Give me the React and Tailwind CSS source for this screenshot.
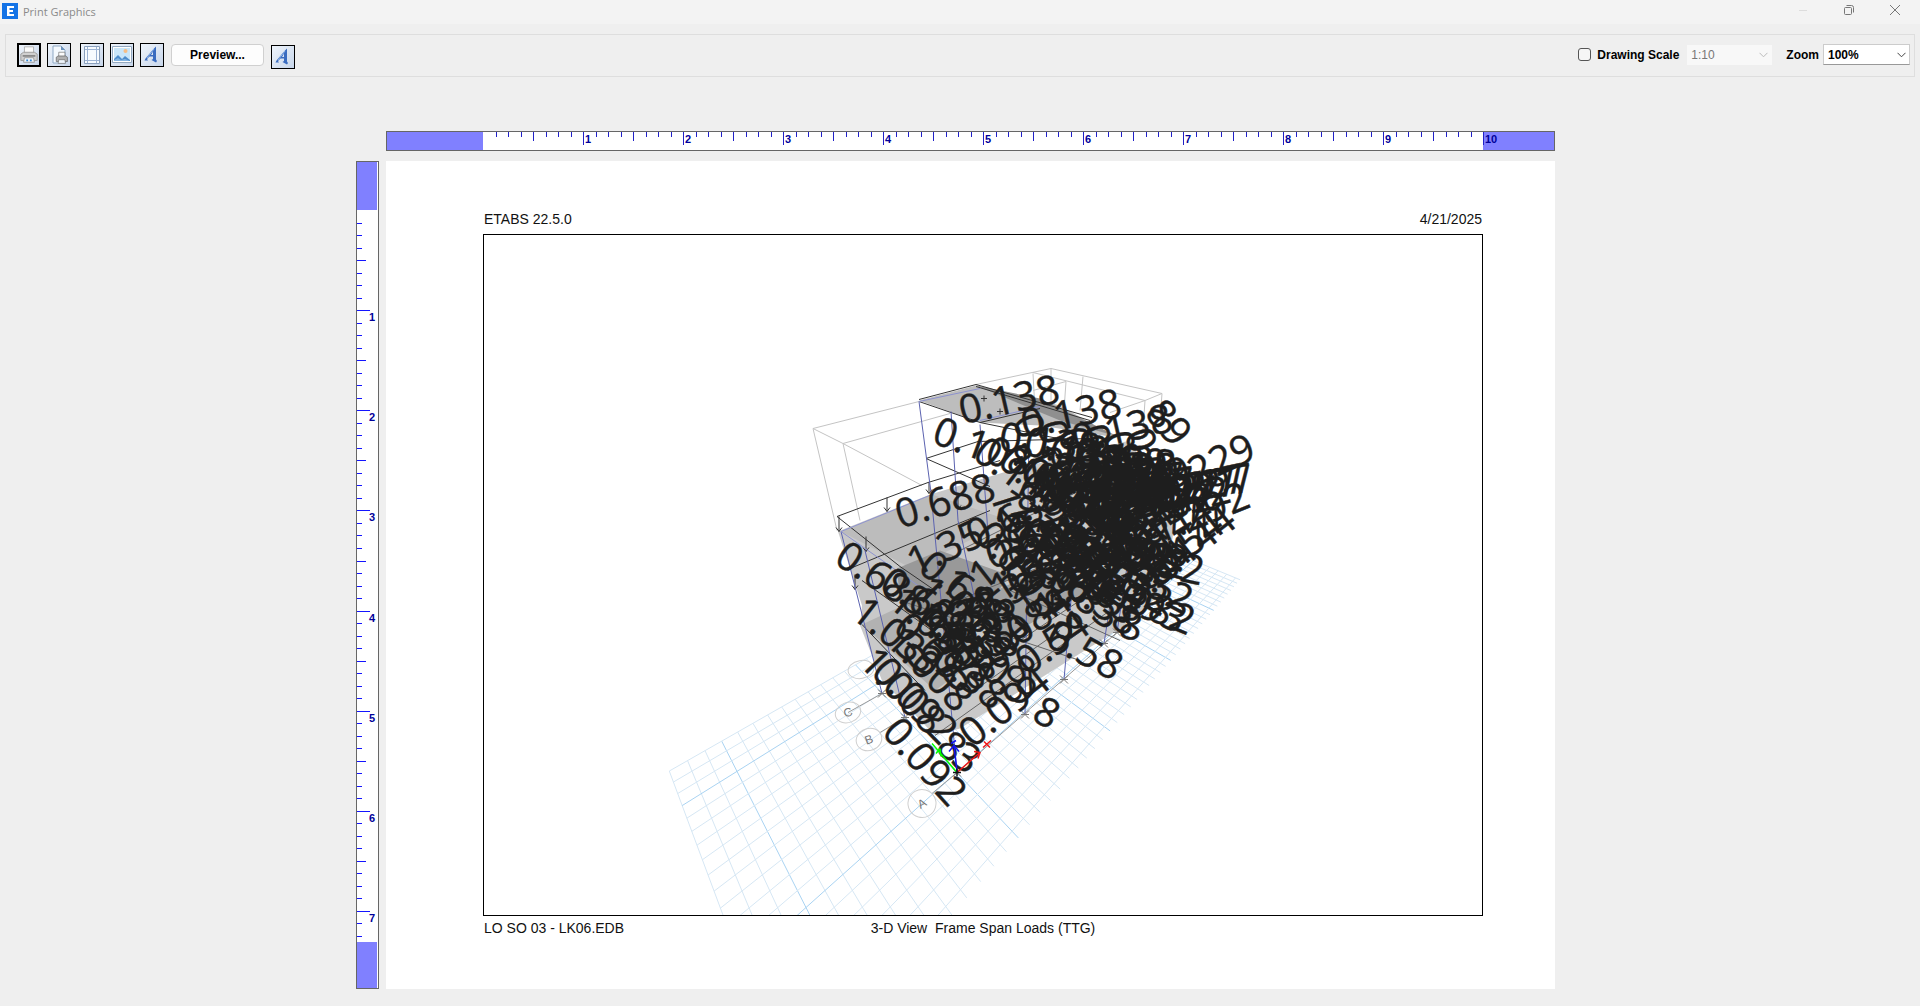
import React from "react";

const INCH_TICKS = ["h-[13px]", "h-[5px]", "h-[5px]", "h-[5px]", "h-[9px]", "h-[5px]", "h-[5px]", "h-[5px]"];
const SIDE_TICKS = ["w-[13px]", "w-[5px]", "w-[5px]", "w-[5px]", "w-[9px]", "w-[5px]", "w-[5px]", "w-[5px]"];

/* ---------- toolbar icons ---------- */

const PrinterShape = () => (
  <>
    <path d="M6 2h10v8H6z" fill="#fbfbfb" stroke="#b0b0b0" />
    <path d="M2 10l3-2h12l3 2v7H2z" fill="#d0d0d0" stroke="#999" />
    <path d="M4 11h14v2H4z" fill="#8a8a8a" />
    <path d="M6 14h10l1 5H5z" fill="#eef4fa" stroke="#9a9a9a" />
    <path d="M8 16h2v2H8zM12 16h2v2h-2z" fill="#2f86d6" />
  </>
);

const PrintIcon = () => (
  <svg viewBox="0 0 22 22" className="h-full w-full">
    <PrinterShape />
  </svg>
);

const PageSetupIcon = () => (
  <svg viewBox="0 0 22 22" className="h-full w-full">
    <path d="M5 2h8l4 4v13H5z" fill="#f4f9fe" stroke="#8fa9c4" />
    <path d="M13 2v4h4z" fill="#6b93bd" />
    <g transform="translate(7 7) scale(.62)">
      <path d="M6 2h10v8H6z" fill="#fbfbfb" stroke="#666" />
      <path d="M2 10l3-2h12l3 2v7H2z" fill="#b0b0b0" stroke="#555" />
      <path d="M6 14h10l1 6H5z" fill="#eef4fa" stroke="#666" />
    </g>
  </svg>
);

const MarginsIcon = () => (
  <svg viewBox="0 0 22 22" className="h-full w-full">
    <path d="M3.500 2.500h15v17h-15z" fill="#f7fbff" stroke="#8aa0bd" />
    <path d="M6.500 3v16M15.500 3v16M4 5.500h14M4 16.500h14" stroke="#9db4d4" />
  </svg>
);

const PictureIcon = () => (
  <svg viewBox="0 0 22 22" className="h-full w-full">
    <path d="M1.500 2.500h19v16h-19z" fill="#fff" stroke="#93a9c0" />
    <path d="M3 4h16v13H3z" fill="#c9e6f9" />
    <circle cx="14.500" cy="7" r="2" fill="#f6bd84" />
    <path d="M3 17v-2l4-4 4 4 3-3 5 4v1z" fill="#4d8ccb" />
    <path d="M3 17v-1l4-2 3 2 4-1 5 2z" fill="#86b5e0" />
  </svg>
);

const FontIcon = () => (
  <svg viewBox="0 0 22 22" className="h-full w-full">
    <path d="M15 2.500v13l1 1.500-1 1.500-4.500-2.500 1.500-1V12.500H8.500l-2.500 2.500 1 1.500H3.500l1-2 8-9.500zM10 11h2V7.500z" fill="#3a6cc0" />
    <path d="M13 5l-7 9" stroke="#8fb6ea" />
  </svg>
);

const ToolButton = ({ label, children, active, className = "" }) => (
  <button
    type="button"
    aria-label={label}
    className={`h-6 w-6 border-black bg-linear-to-br from-[#eef4fb] to-[#c8d6ea] ${active ? "border-2" : "border"} ${className}`}
  >
    {children}
  </button>
);

const Chevron = ({ className }) => (
  <svg viewBox="0 0 9 6" className={`pointer-events-none absolute right-1 top-1/2 h-[6px] w-[9px] -translate-y-1/2 ${className}`}>
    <path d="M.5 .8l4 4 4-4" fill="none" stroke="currentColor" />
  </svg>
);

/* ---------- rulers ---------- */

const TopRuler = () => (
  <div className="flex h-5 border border-[#666] bg-white text-[11px] font-bold leading-none text-[#00009a]">
    <div className="flex-[96] bg-[#8080ff]" />
    <div className="flex flex-[1000]">
      {Array.from({ length: 10 }, (_, inch) => (
        <div key={inch} className="relative grid flex-1 grid-cols-8">
          {INCH_TICKS.map((size, i) => (
            <span key={i} className={inch + i > 0 ? `border-l border-[#2020c8] ${size}` : size} />
          ))}
          {inch > 0 && <span className="absolute left-0.5 top-0.5">{inch}</span>}
        </div>
      ))}
    </div>
    <div className="relative flex-[71] bg-[#8080ff]">
      <span className="block h-[13px] border-l border-[#2020c8] pl-px pt-0.5">10</span>
    </div>
  </div>
);

const SideRuler = () => (
  <div className="flex flex-col border border-[#666] bg-white text-[11px] font-bold leading-none text-[#00009a]">
    <div className="mr-px flex-[48] bg-[#8080ff]" />
    <div className="flex flex-[731] flex-col">
      {Array.from({ length: 7 }, (_, inch) => (
        <div key={inch} className="relative grid flex-[100] grid-rows-8">
          {SIDE_TICKS.map((size, i) => (
            <span key={i} className={inch + i > 0 ? `border-t border-[#1414ff] ${size}` : size} />
          ))}
          {inch > 0 && <span className="absolute right-[3px] top-0.5">{inch}</span>}
        </div>
      ))}
      <div className="relative flex flex-[31] flex-col">
        <span className="w-[13px] flex-[12] border-t border-[#1414ff]" />
        <span className="w-[5px] flex-[13] border-t border-[#1414ff]" />
        <span className="w-[5px] flex-[6] border-t border-[#1414ff]" />
        <span className="absolute right-[3px] top-0.5">7</span>
      </div>
    </div>
    <div className="mr-px flex-[46] bg-[#8080ff]" />
  </div>
);

/* ---------- 3-D view ---------- */

// ground plane -> view coordinates
const project = (u, v) => {
  const w = 1 + 0.296 * u + 0.27 * v;
  return [(806 + 434 * u + 130 * v) / w, (907 + 93.5 * u + 72 * v) / w];
};

const U_MIN = -0.3;
const U_MAX = 4.8;
const V_MIN = -0.55;
const V_MAX = 1.3;

const gridLines = [];
for (let i = -3; i <= 48; i++) {
  gridLines.push({ major: i % 10 === 0, from: project(i / 10, V_MIN), to: project(i / 10, V_MAX) });
}
for (let j = -5; j <= 13; j++) {
  gridLines.push({ major: j % 10 === 0, from: project(U_MIN, j / 10), to: project(U_MAX, j / 10) });
}

// x, y of the label's centre, angle, value
const labels = [
  [1009, 399, -13, "0.138"],
  [1071, 413, -13, "0.138"],
  [1122, 428, -13, "0.138"],
  [1169, 422, 50, "89"],
  [983, 446, 20, "0.108"],
  [945, 500, -17, "0.688"],
  [883, 578, 33, "0.688"],
  [945, 547, -25, "1.35"],
  [898, 636, 38, "1.033"],
  [903, 690, 46, "1.008"],
  [915, 700, 46, "0.092"],
  [925, 761, 48, "0.092"],
  [1004, 706, -38, "0.094"],
  [1010, 680, 38, "0.9"],
  [1085, 650, 28, "0.58"],
  [1052, 642, -35, "0.54"],
  [1103, 603, 35, "0.58"],
  [1206, 466, -25, "1.229"],
  [1203, 485, -10, "1.297"],
  [1195, 487, -12, "1.227"],
  [1187, 490, -12, "1.297"],
  [1200, 512, -22, "1.292"],
  [1190, 545, -38, "0.144"],
  [1178, 550, -38, "0.154"],
  [1165, 563, 12, "0.52"],
  [1146, 603, 22, "0.082"],
  [1138, 600, 24, "0.093"],
];

// label rows along the beams: start, end, count, angle, value
const runs = [
  [1050, 446, 1125, 460, 4, 10, "0.138"],
  [1062, 464, 1140, 478, 8, -12, "1.229"],
  [1040, 455, 1150, 470, 6, 70, "0.18"],
  [1085, 474, 1165, 492, 9, -8, "1.297"],
  [1020, 480, 1090, 500, 4, 40, "0.109"],
  [1100, 500, 1180, 505, 6, -16, "1.292"],
  [1080, 500, 1140, 540, 6, 32, "0.458"],
  [1030, 505, 1150, 525, 7, -38, "1.35"],
  [1090, 520, 1165, 530, 5, -35, "0.144"],
  [1045, 540, 1150, 555, 7, 18, "0.82"],
  [1015, 530, 1095, 570, 6, 75, "1.08"],
  [1015, 520, 1055, 560, 3, -20, "0.688"],
  [1085, 565, 1145, 580, 4, 30, "0.052"],
  [1100, 560, 1155, 575, 4, -40, "0.54"],
  [1005, 560, 1070, 590, 4, -35, "1.35"],
  [1010, 560, 1050, 600, 3, 50, "0.18"],
  [1085, 600, 1105, 590, 2, 40, "0.83"],
  [928, 608, 965, 590, 2, 36, "0.688"],
  [935, 630, 985, 605, 3, 42, "1.033"],
  [930, 650, 980, 620, 3, 46, "0.69"],
  [930, 672, 955, 645, 2, 48, "1.008"],
  [940, 645, 965, 615, 2, -32, "0.38"],
  [980, 625, 1010, 590, 2, -36, "1.35"],
  [985, 655, 1025, 625, 2, -38, "0.084"],
  [970, 680, 1000, 650, 2, 40, "0.38"],
];

const runLabels = runs.flatMap(([x1, y1, x2, y2, count, angle, value]) =>
  Array.from({ length: count }, (_, i) => {
    const t = count > 1 ? i / (count - 1) : 0;
    return [x1 + (x2 - x1) * t, y1 + (y2 - y1) * t + ((i * 7) % 5) * 2 - 4, angle + ((i * 5) % 7) - 3, value];
  })
);

const columns = [
  "M841 531L882 693",
  "M865 550L905 717",
  "M919 401L931 492L957 772",
  "M951 411L958 520L975 600",
  "M980 424L990 560",
  "M1029 430L1025 714",
  "M1078 520L1064 679",
  "M1120 540L1104 643",
  "M1128 560L1117 632",
];

const supports = [
  [882, 693],
  [905, 717],
  [957, 772],
  [1025, 714],
  [1064, 679],
  [1104, 643],
  [1117, 632],
];

const bubbles = [
  [861, 669, 13, 9, -10, ""],
  [848, 712, 13, 10, -20, "C"],
  [869, 739, 13, 11, -20, "B"],
  [922, 803, 14, 14, -30, "A"],
];

const ModelView = () => (
  <svg viewBox="484 235 998 679" className="block h-full w-full" role="img" aria-label="3-D view of frame span loads">
    {gridLines.map(({ major, from, to }, i) => (
      <line
        key={i}
        x1={from[0]}
        y1={from[1]}
        x2={to[0]}
        y2={to[1]}
        stroke={major ? "#a9d3f2" : "#d6e7f4"}
      />
    ))}

    {/* outline of the storeys above */}
    <g fill="none" stroke="#c4c4c4">
      <path d="M919 401L813 428L837 530M813 428L843 443L860 520M843 443L950 413M843 443L922 485" />
      <path d="M976 384L1051 368L1162 393L1145 400L1033 372M1051 368V400M1083 376L1080 410M1066 381L1064 410M1162 393L1160 420M1033 373L1035 410M1145 400L1143 430M1066 381L1033 390M1145 400L1110 412" />
      <path d="M882 693L848 712M905 717L880 732M957 772L932 793M957 772L1117 632" stroke="#9a9a9a" />
    </g>

    {/* slabs */}
    <path d="M838 531L930 494L1010 470L1130 440L1175 520L1165 590L1120 628L960 728L935 735L882 680L860 625L862 605Z" fill="#c9c9c9" />
    <path d="M919 400L976 385L1060 405L1116 437L1040 425L980 422Z" fill="#bdbdbd" />
    <path d="M976 385L1040 398L1118 436L1060 420Z" fill="#8f8f8f" />
    <path d="M841 531L932 494L1010 520L912 568Z" fill="#bcbcbc" />
    <path d="M897 568L940 550L1010 575L960 640L900 600Z" fill="#999" />
    <path d="M862 624L905 604L990 650L935 690Z" fill="#b2b2b2" />
    <path d="M975 600L1060 560L1090 590L1000 640Z" fill="#a3a3a3" />

    <g fill="none" stroke="#333">
      <path d="M919 399L976 384L1092 417M919 401L980 422L1092 445M976 386L1090 420M980 422L1040 408" />
      <path d="M926 458L978 441L1090 438M926 458L990 486M837 516L928 482L1000 460M837 516L900 566L935 590M850 568L990 510M862 580L960 650M862 624L925 690" />
      <path d="M960 550L1080 490M958 600L1130 530M900 600L1080 660M935 735L1110 610M960 700L1060 630M990 660L1080 600M1010 590L1120 640" stroke="#666" />
      <path d="M887 497v14m-3-4l3 4 3-4M839 516v15m-3-4l3 4 3-4M866 536v15m-3-4l3 4 3-4M855 574v15m-3-4l3 4 3-4M929 482v11m-3-4l3 4 3-4M958 496v13m-3-4l3 4 3-4" />
      <path d="M981 398h6m-3-3v6M997 411h6m-3-3v6" />
    </g>
    <g fill="none" stroke="#5b62b0">
      {columns.map((d) => (
        <path key={d} d={d} />
      ))}
      <path d="M841 531L932 494M841 531L925 590M919 401L980 388M980 420L1040 406" stroke="#8d92cf" />
    </g>
    {supports.map(([x, y]) => (
      <path key={x} d={`M${x - 4} ${y + 4}L${x + 4} ${y - 4}M${x - 4} ${y - 4}L${x + 4} ${y + 4}M${x - 4} ${y}H${x + 4}`} stroke="#777" />
    ))}

    {bubbles.map(([x, y, rx, ry, angle, name]) => (
      <g key={y} transform={`translate(${x} ${y}) rotate(${angle})`}>
        <ellipse rx={rx} ry={ry} fill="none" stroke="#cfcfcf" />
        <text y="4" textAnchor="middle" fill="#777" className="text-[12px]">
          {name}
        </text>
      </g>
    ))}

    <g
      className="text-[40px]"
      fill="#1e1e1e"
      stroke="#1e1e1e"
      strokeWidth=".4"
      textAnchor="middle"
      fontFamily="Open Sans, Noto Sans, sans-serif"
    >
      {[...runLabels, ...labels].map(([x, y, angle, value], i) => (
        <text key={i} y="14" transform={`translate(${x} ${y}) rotate(${angle})`}>
          {value}
        </text>
      ))}
      <text y="14" transform="translate(967 757) rotate(35)">3</text>
      <text y="14" transform="translate(952 746) rotate(40)">8</text>
      <text y="14" transform="translate(1047 712) rotate(28)">8</text>
      <text y="14" transform="translate(1131 625) rotate(10)">8</text>
    </g>

    {/* global axes */}
    <g fill="none" strokeWidth="1.5">
      <path d="M957 772L932 743m4 10l4-5m0 0l1 8" stroke="#0f0" />
      <path d="M957 772L980 752m-6-1l6 1-2 6M983 747l8-7m-7 1l6 6" stroke="#f01818" />
      <path d="M957 771L954 745m-5 6l5-6 5 6m-8-8l5-3" stroke="#1414f0" />
      <path d="M953 772h8m-4-4v8" stroke="#111" />
    </g>
  </svg>
);

/* ---------- window ---------- */

const TitleBar = () => (
  <header className="flex h-6 items-center bg-[#f3f3f3] pl-0.5">
    <svg viewBox="0 0 16 16" className="mb-0.5 h-4 w-4">
      <path d="M0 0h16v16H0z" fill="#1473e6" />
      <path d="M5 3h7v2H7.500v2H11v2H7.500v2H12v2H5z" fill="#fff" />
    </svg>
    <h1 className="ml-[5px] font-['Open_Sans',sans-serif] text-[11px] text-[#8a8a8a]">Print Graphics</h1>
    <div className="mb-1 ml-auto flex h-5 items-center text-[#777]">
      <button type="button" aria-label="Minimize" className="flex w-[46px] justify-center">
        <svg viewBox="0 0 10 10" className="h-[10px] w-[10px]">
          <path d="M1 5.500h8" stroke="#ddd" />
        </svg>
      </button>
      <button type="button" aria-label="Restore" className="flex w-[46px] justify-center">
        <svg viewBox="0 0 10 10" className="h-[10px] w-[10px]" fill="none" stroke="currentColor">
          <rect x=".5" y="2.500" width="7" height="7" rx="1" />
          <path d="M2.500 .5h5a2 2 0 0 1 2 2v5" />
        </svg>
      </button>
      <button type="button" aria-label="Close" className="flex w-[46px] justify-center">
        <svg viewBox="0 0 10 10" className="h-[10px] w-[10px]">
          <path d="M0 0l10 10M10 0L0 10" stroke="currentColor" />
        </svg>
      </button>
      <span className="w-0.5" />
    </div>
  </header>
);

const Toolbar = () => (
  <div className="mx-[5px] mt-2.5 flex h-[43px] items-center border border-[#dedede] pb-0.5 pl-[11px] pr-1 text-xs font-bold text-black">
    <ToolButton label="Print" active>
      <PrintIcon />
    </ToolButton>
    <ToolButton label="Page setup" className="ml-1.5">
      <PageSetupIcon />
    </ToolButton>
    <ToolButton label="Margins" className="ml-[9px]">
      <MarginsIcon />
    </ToolButton>
    <ToolButton label="Picture" className="ml-1.5">
      <PictureIcon />
    </ToolButton>
    <ToolButton label="Header font" className="ml-1.5">
      <FontIcon />
    </ToolButton>
    <button type="button" className="ml-[7px] h-[22px] w-[93px] rounded-[4px] border border-[#d0d0d0] bg-[#fdfdfd]">
      Preview...
    </button>
    <ToolButton label="Footer font" className="ml-[7px] mt-1">
      <FontIcon />
    </ToolButton>

    <div className="ml-auto flex items-center">
      <input
        id="drawing-scale"
        type="checkbox"
        className="h-[13px] w-[13px] appearance-none rounded-[3px] border border-[#555] bg-[#f6f6f6] checked:bg-[#1473e6]"
      />
      <label htmlFor="drawing-scale" className="ml-1.5">
        Drawing Scale
      </label>
      <div className="relative ml-2 text-[#777]">
        <select aria-label="Scale" disabled className="block h-5 w-[85px] appearance-none bg-[#f8f8f8] pl-1 font-normal">
          <option>1:10</option>
        </select>
        <Chevron className="text-[#bbb]" />
      </div>
      <label htmlFor="zoom" className="ml-3.5">
        Zoom
      </label>
      <div className="relative ml-1">
        <select id="zoom" className="block h-[21px] w-[87px] appearance-none border border-[#ccc] border-b-[#999] bg-white pl-1">
          <option>100%</option>
        </select>
        <Chevron className="text-[#444]" />
      </div>
    </div>
  </div>
);

const App = () => {
  return (
    <div className="min-h-screen bg-[#efefef] font-['Liberation_Sans',Arial,sans-serif]">
      <TitleBar />
      <Toolbar />

      <main className="flex justify-center pb-4 pr-[9px] pt-[54px]">
        <div className="grid w-full max-w-[1199px] grid-cols-[23px_1fr] gap-x-[7px] gap-y-2.5">
          <div />
          <TopRuler />
          <SideRuler />

          {/* A4 sheet, landscape */}
          <section className="flex aspect-[1169/828] flex-col bg-white pb-[51px] pl-[97px] pr-[72px] pt-12 text-sm leading-5 text-[#111]">
            <div className="flex justify-between px-px">
              <span>ETABS 22.5.0</span>
              <span>4/21/2025</span>
            </div>
            <div className="mt-[5px] min-h-0 flex-1 border border-black">
              <ModelView />
            </div>
            <div className="mt-0.5 grid grid-cols-3 px-px">
              <span>LO SO 03 - LK06.EDB</span>
              <span className="whitespace-pre text-center">3-D View  Frame Span Loads (TTG)</span>
            </div>
          </section>
        </div>
      </main>
    </div>
  );
};

export default App;
